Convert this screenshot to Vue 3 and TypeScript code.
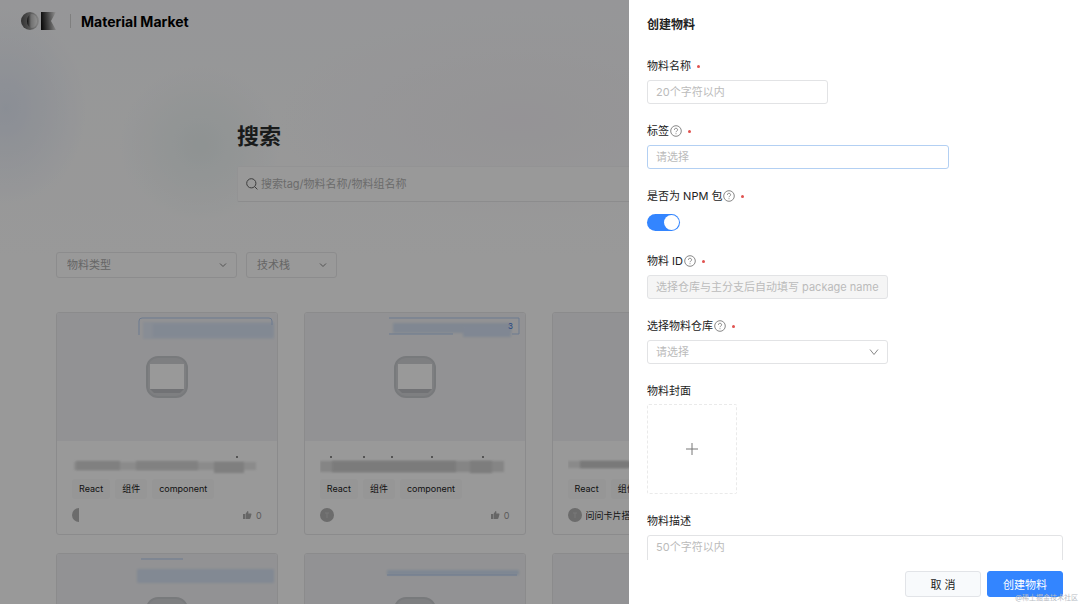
<script setup lang="ts">
import { ref } from 'vue'

interface Smudge {
  x: number
  y: number
  w: number
  h: number
  fill: string
}

interface Material {
  id: number
  outline: string
  badge: Smudge[]
  title: Smudge[]
  dots: number[]
  count?: string
  icon: boolean
  owner: string
}

const materials: Material[] = [
  {
    id: 1,
    outline: 'M84 22V8a3 3 0 0 1 3-3h127a3 3 0 0 1 3 3v4',
    badge: [
      { x: 88, y: 9, w: 131, h: 17, fill: '#e3ebf8' },
      { x: 98, y: 11, w: 120, h: 13, fill: '#d9e4f6' },
    ],
    title: [
      { x: 2, y: 3, w: 182, h: 8, fill: '#e8e8e8' },
      { x: 4, y: 2, w: 44, h: 9, fill: '#d6d6d6' },
      { x: 64, y: 2, w: 62, h: 9, fill: '#d8d8d8' },
      { x: 142, y: 3, w: 30, h: 11, fill: '#d4d4d4' },
    ],
    dots: [165],
    icon: true,
    owner: '',
  },
  {
    id: 2,
    outline: 'M86 5h130v16h-7M86 21h64',
    badge: [
      { x: 90, y: 10, w: 118, h: 10, fill: '#d6e2f3' },
      { x: 160, y: 13, w: 48, h: 11, fill: '#d6e2f5' },
    ],
    title: [
      { x: 0, y: 2, w: 184, h: 11, fill: '#dedede' },
      { x: 12, y: 2, w: 124, h: 11, fill: '#cecece' },
      { x: 150, y: 2, w: 22, h: 12, fill: '#d0d0d0' },
    ],
    dots: [11, 44, 72, 112, 163],
    count: '3',
    icon: true,
    owner: '',
  },
  {
    id: 3,
    outline: '',
    badge: [],
    title: [
      { x: 0, y: 2, w: 60, h: 7, fill: '#e6e6e6' },
      { x: 12, y: 2, w: 90, h: 7, fill: '#cacaca' },
    ],
    dots: [],
    icon: false,
    owner: '问问卡片搭建',
  },
  { id: 4, outline: '', badge: [], title: [], dots: [], icon: false, owner: '' },
  {
    id: 5,
    outline: 'M86 5h42',
    badge: [{ x: 82, y: 15, w: 137, h: 14, fill: '#d9e4f6' }],
    title: [],
    dots: [],
    icon: true,
    owner: '',
  },
  {
    id: 6,
    outline: 'M84 21h130',
    badge: [{ x: 84, y: 16, w: 132, h: 5, fill: '#d3e2f6' }],
    title: [],
    dots: [],
    icon: true,
    owner: '',
  },
  { id: 7, outline: '', badge: [], title: [], dots: [], icon: false, owner: '' },
  { id: 8, outline: '', badge: [], title: [], dots: [], icon: false, owner: '' },
]

const tags = ['React', '组件', 'component']
const isNpm = ref(true)
</script>

<template>
  <div class="page">
    <div class="market">
      <header class="topbar">
        <svg class="logo" viewBox="0 0 36 18" aria-hidden="true">
          <defs>
            <linearGradient id="ring" x1="0" x2="1">
              <stop offset="0" stop-color="#555" />
              <stop offset="0.45" stop-color="#888" />
              <stop offset="1" stop-color="#e2e2e2" />
            </linearGradient>
            <linearGradient id="core" x1="0" x2="1">
              <stop offset="0" stop-color="#111" />
              <stop offset="0.4" stop-color="#bbb" />
              <stop offset="1" stop-color="#efefef" />
            </linearGradient>
            <linearGradient id="wing" x1="0" x2="1" y1="0.5" y2="0.4">
              <stop offset="0" stop-color="#111" />
              <stop offset="0.5" stop-color="#777" />
              <stop offset="1" stop-color="#eee" />
            </linearGradient>
          </defs>
          <circle cx="9" cy="9" r="9" fill="url(#ring)" />
          <ellipse cx="11" cy="9" rx="5" ry="7" fill="url(#core)" />
          <path d="M20 0h15l-5 9 5 9H20z" fill="url(#wing)" />
        </svg>
        <span class="divider"></span>
        <span class="brand">Material Market</span>
      </header>

      <section class="hero">
        <h1>搜索</h1>
        <label class="search">
          <svg viewBox="0 0 12 12" aria-hidden="true">
            <circle cx="5.3" cy="5.3" r="4.6" />
            <path d="M8.600 8.600l2.800 2.800" />
          </svg>
          <input type="text" placeholder="搜索tag/物料名称/物料组名称" aria-label="搜索" />
        </label>
      </section>

      <div class="filters">
        <div class="pick pick-type">
          <select aria-label="物料类型"><option>物料类型</option></select>
          <svg viewBox="0 0 10 10" aria-hidden="true"><path d="M2 3.500l3 3 3-3" /></svg>
        </div>
        <div class="pick pick-stack">
          <select aria-label="技术栈"><option>技术栈</option></select>
          <svg viewBox="0 0 10 10" aria-hidden="true"><path d="M2 3.500l3 3 3-3" /></svg>
        </div>
      </div>

      <main class="grid">
        <article v-for="m in materials" :key="m.id" class="card">
          <div class="cover">
            <svg class="badge" viewBox="0 0 222 32" aria-hidden="true">
              <rect
                v-for="(s, i) in m.badge"
                :key="i"
                class="soft"
                :x="s.x"
                :y="s.y"
                :width="s.w"
                :height="s.h"
                :fill="s.fill"
              />
              <path :d="m.outline" fill="none" stroke="#b3cbef" />
              <text v-if="m.count" x="205" y="16">{{ m.count }}</text>
            </svg>
            <svg v-if="m.icon" class="thumb" viewBox="0 0 42 42" aria-hidden="true">
              <rect x="1" y="1" width="40" height="40" rx="11" fill="#d3d4d8" stroke="#c9cbcf" stroke-width="2" />
              <path d="M4 33h34l-4 4H8z" fill="#bdbfc3" />
              <rect x="4" y="8" width="34" height="25" fill="#fff" />
            </svg>
          </div>
          <div class="body">
            <svg class="name" viewBox="0 0 190 16" aria-hidden="true">
              <rect
                v-for="(s, i) in m.title"
                :key="i"
                class="soft"
                :x="s.x"
                :y="s.y"
                :width="s.w"
                :height="s.h"
                :fill="s.fill"
              />
            </svg>
            <svg class="dots" viewBox="0 0 190 4" aria-hidden="true">
              <circle v-for="d in m.dots" :key="d" :cx="d" cy="2" r="1" />
            </svg>
            <div class="tags">
              <span v-for="t in tags" :key="t">{{ t }}</span>
            </div>
            <div class="meta">
              <svg class="avatar" viewBox="0 0 14 14" aria-hidden="true">
                <path v-if="m.id === 1" d="M7 0a7 7 0 0 0 0 14z" fill="#b4b4b4" />
                <circle v-else cx="7" cy="7" r="7" fill="#b4b4b4" />
                <path v-if="m.id !== 1" d="M5 5h4M7 5v5" stroke="#c8c8c8" />
              </svg>
              <span class="owner">{{ m.owner }}</span>
              <svg class="like" viewBox="0 0 10 10" aria-hidden="true">
                <path d="M1 4h2v5H1zM3.500 4L5.500 1c1.200 0 1 1.500.7 2.500H9c.6 0 .6 1 .3 1.500L8.300 8.500 7.500 9h-4z" />
              </svg>
              <span class="likes">0</span>
            </div>
          </div>
        </article>
      </main>
    </div>

    <div class="mask"></div>

    <aside class="drawer" role="dialog" aria-labelledby="drawer-title">
      <form class="form" @submit.prevent>
        <h2 id="drawer-title">创建物料</h2>

        <div class="item">
          <div class="label"><label for="name">物料名称</label><i class="req"></i></div>
          <input id="name" class="control w-small" type="text" placeholder="20个字符以内" />
        </div>

        <div class="item">
          <div class="label">
            <label for="tag">标签</label>
            <svg class="help" viewBox="0 0 12 12" aria-hidden="true">
              <circle cx="6" cy="6" r="5.300" />
              <path d="M4.400 4.800a1.600 1.500 0 1 1 2.300 1.300Q6 6.500 6 7.200M6 8.300v.9" />
            </svg>
            <i class="req"></i>
          </div>
          <input id="tag" class="control w-large focused" type="text" role="combobox" aria-expanded="false" placeholder="请选择" />
        </div>

        <div class="item">
          <div class="label">
            <label for="npm">是否为 NPM 包</label>
            <svg class="help" viewBox="0 0 12 12" aria-hidden="true">
              <circle cx="6" cy="6" r="5.300" />
              <path d="M4.400 4.800a1.600 1.500 0 1 1 2.300 1.300Q6 6.500 6 7.200M6 8.300v.9" />
            </svg>
            <i class="req"></i>
          </div>
          <div class="switch-row">
            <input id="npm" v-model="isNpm" class="switch" type="checkbox" role="switch" />
          </div>
        </div>

        <div class="item">
          <div class="label">
            <label for="pkg">物料 ID</label>
            <svg class="help" viewBox="0 0 12 12" aria-hidden="true">
              <circle cx="6" cy="6" r="5.300" />
              <path d="M4.400 4.800a1.600 1.500 0 1 1 2.300 1.300Q6 6.500 6 7.200M6 8.300v.9" />
            </svg>
            <i class="req"></i>
          </div>
          <input id="pkg" class="control w-medium" type="text" disabled placeholder="选择仓库与主分支后自动填写 package name" />
        </div>

        <div class="item">
          <div class="label">
            <label for="repo">选择物料仓库</label>
            <svg class="help" viewBox="0 0 12 12" aria-hidden="true">
              <circle cx="6" cy="6" r="5.300" />
              <path d="M4.400 4.800a1.600 1.500 0 1 1 2.300 1.300Q6 6.500 6 7.200M6 8.300v.9" />
            </svg>
            <i class="req"></i>
          </div>
          <div class="select-wrap w-medium">
            <select id="repo" class="control"><option>请选择</option></select>
            <svg viewBox="0 0 10 10" aria-hidden="true"><path d="M1 2.500l4 5 4-5" /></svg>
          </div>
        </div>

        <div class="item item-cover">
          <div class="label"><label for="cover">物料封面</label></div>
          <button id="cover" class="upload" type="button" aria-label="上传物料封面">
            <svg viewBox="0 0 12 12" aria-hidden="true"><path d="M6 0v12M0 6h12" /></svg>
          </button>
        </div>

        <div class="item">
          <div class="label"><label for="desc">物料描述</label></div>
          <textarea id="desc" class="control area" placeholder="50个字符以内"></textarea>
        </div>
      </form>

      <footer class="actions">
        <button class="btn" type="button">取 消</button>
        <button class="btn primary" type="button">创建物料</button>
      </footer>
      <span class="watermark">@稀土掘金技术社区</span>
    </aside>
  </div>
</template>

<style>
body {
  margin: 0;
}
</style>

<style scoped>
.page,
.page input,
.page select,
.page textarea,
.page button {
  font-family: Inter, 'Noto Sans CJK SC', sans-serif;
}

.page {
  position: relative;
  height: 100vh;
  overflow: hidden;
  font-size: 11px;
  color: #333;
}

.page *,
.page *::before {
  box-sizing: border-box;
}

.market {
  height: 100%;
  overflow: hidden;
  background:
    radial-gradient(ellipse 80px 100px at 6px 108px, #e7edf9 0, transparent 100%),
    radial-gradient(ellipse 80px 80px at 200px 145px, #eef5f5 0, transparent 100%),
    radial-gradient(ellipse 240px 110px at 520px 120px, #f8f6fa 0, transparent 100%),
    linear-gradient(#fafbfd, #fff 260px);
}

.topbar {
  display: flex;
  align-items: center;
  height: 42px;
  padding: 0 21px;
}

.logo {
  width: 36px;
  height: 18px;
}

.divider {
  width: 1px;
  height: 14px;
  margin: 0 10px 0 13px;
  background: #d4d4d4;
}

.brand {
  font-size: 14px;
  font-weight: 700;
  color: #000;
}

.hero {
  max-width: 606px;
  margin: 0 auto;
  padding-top: 78px;
}

h1 {
  margin: 0;
  font-size: 22px;
  line-height: 32px;
  font-weight: 700;
  color: #2b2e2e;
}

.search {
  display: flex;
  align-items: center;
  gap: 3px;
  height: 36px;
  margin-top: 14px;
  padding: 0 8px;
  border: 1px solid #f6f6f7;
  border-bottom-color: #e9e9eb;
  border-radius: 2px;
  background: #fff;
}

.search svg {
  flex: none;
  width: 12px;
  height: 12px;
  fill: none;
  stroke: #666;
}

.search input {
  flex: 1;
  min-width: 0;
  padding: 0;
  border: 0;
  outline: 0;
  background: none;
  font-size: 11px;
}

.search input::placeholder {
  color: #b4b4b4;
}

.filters {
  display: flex;
  gap: 9px;
  margin: 50px 0 0 56px;
}

.pick,
.select-wrap {
  display: grid;
  align-items: center;
}

.pick > *,
.select-wrap > * {
  grid-area: 1 / 1;
}

.pick > svg,
.select-wrap > svg {
  justify-self: end;
  width: 10px;
  height: 10px;
  margin-right: 9px;
  fill: none;
  stroke: #888;
  pointer-events: none;
}

.pick-type {
  width: 181px;
}

.pick-stack {
  width: 91px;
}

.pick select {
  appearance: none;
  width: 100%;
  height: 26px;
  padding: 0 10px;
  border: 1px solid #eaeaec;
  border-radius: 3px;
  background: #fff;
  color: #aaa;
  font-size: 11px;
}

.grid {
  display: grid;
  grid-template-columns: repeat(4, 1fr);
  gap: 18px 26px;
  margin: 34px 59px 0 56px;
}

.card {
  overflow: hidden;
  border: 1px solid #e8e8ea;
  border-radius: 3px;
  background: #fff;
}

.cover {
  position: relative;
  display: flex;
  align-items: center;
  justify-content: center;
  height: 128px;
  background: #f4f4f7;
}

.badge {
  position: absolute;
  top: 0;
  right: 0;
  width: 222px;
  height: 32px;
}

.badge text {
  font-size: 8px;
  fill: #3f78d8;
}

.soft {
  filter: blur(1px);
}

.thumb {
  width: 42px;
  height: 42px;
}

.body {
  position: relative;
  padding: 18px 15px 12px;
}

.name {
  display: block;
  width: 190px;
  height: 16px;
}

.dots {
  position: absolute;
  top: 14px;
  left: 15px;
  width: 190px;
  height: 4px;
  fill: #666;
}

.tags {
  display: flex;
  gap: 5px;
  margin-top: 4px;
}

.tags span {
  padding: 0 7px;
  border-radius: 3px;
  background: #fbfbfb;
  font-size: 9px;
  line-height: 20px;
  color: #222;
}

.meta {
  display: flex;
  align-items: center;
  height: 14px;
  margin-top: 9px;
  font-size: 9px;
}

.avatar {
  width: 14px;
  height: 14px;
  margin-right: 4px;
}

.owner {
  flex: 1;
  white-space: nowrap;
  overflow: hidden;
  color: #222;
}

.like {
  width: 10px;
  height: 10px;
  margin-right: 4px;
  fill: #aaa;
}

.likes {
  color: #999;
}

.mask {
  position: absolute;
  inset: 0;
  background: rgba(0, 0, 0, 0.4);
}

.drawer {
  position: absolute;
  top: 0;
  right: 0;
  bottom: 0;
  display: flex;
  flex-direction: column;
  width: 451px;
  background: #fff;
}

.form {
  flex: 1;
  min-height: 0;
  overflow: hidden;
  padding: 15px 17px 0 18px;
}

h2 {
  margin: 0 0 23px;
  font-size: 12px;
  line-height: 20px;
  font-weight: 700;
  color: #222;
}

.item {
  display: flex;
  flex-direction: column;
  align-items: flex-start;
  gap: 6px;
  margin-bottom: 19px;
}

.item-cover {
  gap: 5px;
}

.label {
  display: flex;
  align-items: center;
  height: 16px;
  line-height: 16px;
  color: #222;
}

.help {
  width: 12px;
  height: 12px;
  margin-left: 1px;
  fill: none;
  stroke: #888;
}

.req {
  width: 3px;
  height: 3px;
  margin-left: 6px;
  border-radius: 50%;
  background: #e0524f;
}

.control {
  width: 100%;
  height: 24px;
  padding: 0 8px;
  border: 1px solid #e2e3e5;
  border-radius: 3px;
  outline: 0;
  background: #fff;
  font-size: 11px;
}

.control::placeholder {
  color: #bbb;
}

.control:disabled {
  background: #f5f5f5;
}

select.control {
  appearance: none;
  color: #bbb;
}

.focused {
  border-color: #b3d0f3;
}

.w-small {
  width: 181px;
}

.w-medium {
  width: 241px;
}

.w-large {
  width: 302px;
}

.switch-row {
  display: flex;
  align-items: center;
  height: 24px;
}

.switch {
  appearance: none;
  display: flex;
  align-items: center;
  width: 33px;
  height: 17px;
  margin: 0;
  padding: 0 1px;
  border-radius: 9px;
  background: #bbb;
}

.switch::before {
  content: '';
  width: 15px;
  height: 15px;
  border-radius: 50%;
  background: #fff;
}

.switch:checked {
  justify-content: flex-end;
  background: #3385ff;
}

.upload {
  display: flex;
  align-items: center;
  justify-content: center;
  width: 90px;
  height: 90px;
  padding: 0;
  border: 1px dashed #eaeaea;
  border-radius: 2px;
  background: #fff;
}

.upload svg {
  width: 12px;
  height: 12px;
  stroke: #777;
}

.area {
  height: 60px;
  padding: 3px 8px;
  line-height: 16px;
  resize: none;
}

.actions {
  display: flex;
  justify-content: flex-end;
  gap: 6px;
  padding: 11px 17px 7px;
}

.btn {
  width: 76px;
  height: 26px;
  padding: 0;
  border: 1px solid #e2e4e8;
  border-radius: 3px;
  background: #f8fafc;
  font-size: 11px;
  color: #222;
}

.primary {
  border-color: #3385ff;
  background: #3385ff;
  color: #fff;
}

.watermark {
  position: absolute;
  right: 2px;
  bottom: 1px;
  font-size: 7px;
  line-height: 10px;
  color: #b8bcc4;
  pointer-events: none;
}
</style>
